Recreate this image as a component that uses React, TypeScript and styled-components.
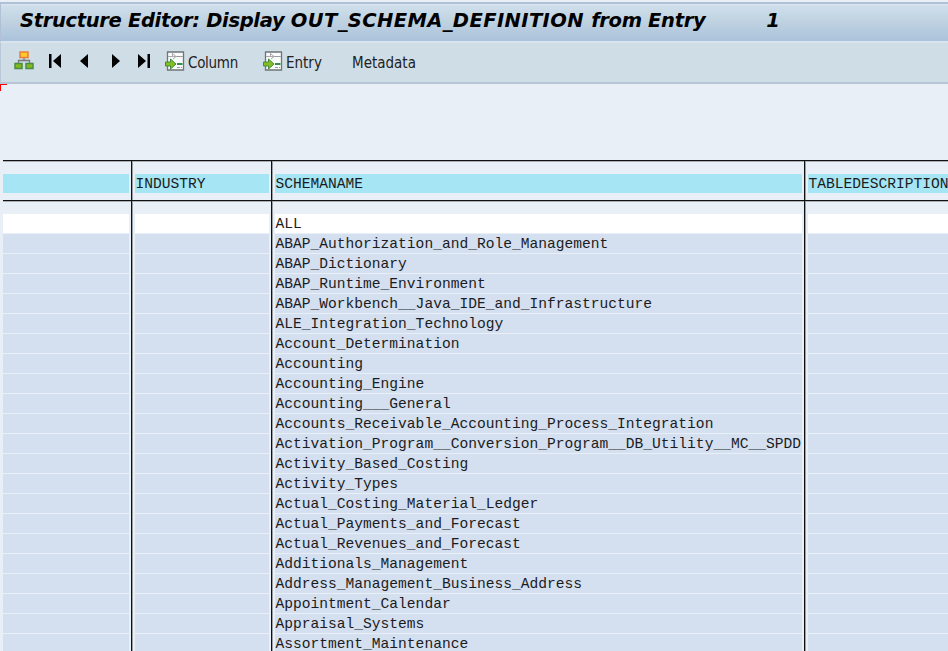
import React from "react";
import styled, { createGlobalStyle } from "styled-components";

const GlobalStyle = createGlobalStyle`
  * { box-sizing: border-box; }
  html, body { margin: 0; background: #e8eff6; overflow: hidden; }
`;

const Screen = styled.div`
  width: 948px;
  height: 651px;
  overflow: hidden;
  background: #e8eff6;
  display: flex;
  flex-direction: column;
  color: #000;
`;

const TitleBar = styled.header`
  flex: none;
  margin-top: 2px;
  height: 41px;
  display: flex;
  align-items: center;
  padding-left: 19px;
  border-top: 2px solid #b0c1d5;
  border-left: 1px solid #b0c1d5;
  border-bottom: 2px solid #d8e4f0;
  background: linear-gradient(#dce8f2 0, #cfdeeb 2px, #c0d3e1 45%, #aac2db 100%);
  white-space: pre;
`;

const Title = styled.h1`
  margin: 0 0 4px;
  font: italic bold 19.5px/24px "DejaVu Sans", Verdana, sans-serif;
  letter-spacing: -0.33px;
`;

const StructureName = styled.span`
  letter-spacing: 0.4px;
`;

const TitleIndex = styled(Title)`
  margin-left: 61px;
`;

const Toolbar = styled.nav`
  flex: none;
  height: 41px;
  display: flex;
  align-items: center;
  padding: 0 0 3px 13px;
  border-left: 1px solid #b8c8d7;
  border-bottom: 2px solid #b7c6d4;
  background: #cfdde7;
`;

const ToolButton = styled.button<{ $width: number; $tracking?: number }>`
  flex: none;
  width: ${(p) => p.$width}px;
  height: 24px;
  padding: 0;
  border: 0;
  background: none;
  color: #222;
  display: flex;
  align-items: center;
  gap: 3px;
  font: 15px/20px "DejaVu Sans Condensed", "DejaVu Sans", sans-serif;
  font-stretch: condensed;
  letter-spacing: ${(p) => p.$tracking ?? 0}px;
  white-space: nowrap;
`;

const Label = styled.span`
  padding-top: 3px;
`;

const Icon = styled.svg`
  flex: none;
  display: block;
`;

const ListArea = styled.main`
  position: relative;
  flex: 1;
  padding: 76px 0 0 3px;
`;

const CornerMark = styled.i`
  position: absolute;
  left: 0;
  top: 0;
  width: 7px;
  height: 7px;
  border-top: 1px solid #f00;
  border-left: 1px solid #f00;
`;

const Row = styled.div<{ $height: number }>`
  display: grid;
  grid-template-columns: 128px 140px 533px 150px;
  height: ${(p) => p.$height}px;
`;

const HeaderRow = styled(Row)`
  border-top: 1px solid #111;
  border-bottom: 1px solid #111;
  box-shadow: 0 1px 0 #aab0b5, inset 0 1px 0 #aab0b5;
`;

const Cell = styled.div<{ $top?: number }>`
  padding: ${(p) => p.$top ?? 0}px 2px 0 3px;
  border-left: 1px solid #111;
  box-shadow: inset 1px 0 0 #9a9fa4;
  &:first-child {
    border-left: 0;
    padding-left: 0;
    box-shadow: none;
  }
`;

const Fill = styled.div<{ $tone: "key" | "plain" | "data" }>`
  height: 19px;
  padding-left: 0.5px;
  background: ${(p) => ({ key: "#a6e5f3", plain: "#fff", data: "#d4dff0" })[p.$tone]};
  color: #1b1c22;
  font: 14.6px/20px "Liberation Mono", "Courier New", monospace;
  white-space: pre;
`;

const columns = ["", "INDUSTRY", "SCHEMANAME", "TABLEDESCRIPTION"];

const schemas = [
  "ALL",
  "ABAP_Authorization_and_Role_Management",
  "ABAP_Dictionary",
  "ABAP_Runtime_Environment",
  "ABAP_Workbench__Java_IDE_and_Infrastructure",
  "ALE_Integration_Technology",
  "Account_Determination",
  "Accounting",
  "Accounting_Engine",
  "Accounting___General",
  "Accounts_Receivable_Accounting_Process_Integration",
  "Activation_Program__Conversion_Program__DB_Utility__MC__SPDD",
  "Activity_Based_Costing",
  "Activity_Types",
  "Actual_Costing_Material_Ledger",
  "Actual_Payments_and_Forecast",
  "Actual_Revenues_and_Forecast",
  "Additionals_Management",
  "Address_Management_Business_Address",
  "Appointment_Calendar",
  "Appraisal_Systems",
  "Assortment_Maintenance",
];

const HierarchyIcon = () => (
  <Icon width="20" height="20" viewBox="0 0 20 20">
    <path d="M10 7v3M4.500 12.500V9.500h11v3" fill="none" stroke="#777" strokeWidth="1.300" />
    <rect x="6" y="1" width="8" height="5.500" fill="#ffc928" stroke="#ec7d36" strokeWidth="1.500" />
    <rect x="1" y="12.500" width="7" height="5" fill="#83b81e" stroke="#4b8d43" strokeWidth="1.500" />
    <rect x="12" y="12.500" width="7" height="5" fill="#83b81e" stroke="#4b8d43" strokeWidth="1.500" />
  </Icon>
);

const StepIcon = ({ forward, bar }: { forward?: boolean; bar?: boolean }) => (
  <Icon width="12" height="14" viewBox="0 0 12 14">
    <g transform={forward ? "translate(12 0) scale(-1 1)" : undefined}>
      {bar && <rect x="0" y="0" width="2.500" height="14" />}
      <path d={bar ? "M12 0v14L4 7z" : "M9 0v14L1 7z"} />
    </g>
  </Icon>
);

const SheetIcon = () => (
  <Icon width="20" height="20" viewBox="0 0 20 20">
    <path d="M2.500 1h16v18h-16z" fill="#f8fafb" stroke="#707477" strokeWidth="1.300" />
    <path d="M3 5.500h15M7.500 2v4M8 3l3 2.500L8 8" fill="none" stroke="#aaa" strokeWidth="1" />
    <path d="M12 5.500h5M12 16.500h5" stroke="#999" strokeDasharray="3 1" />
    <path d="M12 13h5.500" stroke="#338c50" strokeWidth="2" />
    <path d="M.5 11h5V8l5.500 5-5.500 5v-3h-5z" fill="#84bd25" stroke="#438c35" />
  </Icon>
);

export default function App() {
  return (
    <Screen>
      <GlobalStyle />
      <TitleBar>
        <Title>
          Structure Editor: Display <StructureName>OUT_SCHEMA_DEFINITION </StructureName>from Entry
        </Title>
        <TitleIndex as="span">1</TitleIndex>
      </TitleBar>
      <Toolbar>
        <ToolButton $width={35} aria-label="Hierarchy"><HierarchyIcon /></ToolButton>
        <ToolButton $width={30} aria-label="First"><StepIcon bar /></ToolButton>
        <ToolButton $width={30} aria-label="Previous"><StepIcon /></ToolButton>
        <ToolButton $width={29} aria-label="Next"><StepIcon forward /></ToolButton>
        <ToolButton $width={27} aria-label="Last"><StepIcon forward bar /></ToolButton>
        <ToolButton $width={98} $tracking={-0.3}><SheetIcon /><Label>Column</Label></ToolButton>
        <ToolButton $width={89}><SheetIcon /><Label>Entry</Label></ToolButton>
        <ToolButton $width={70}><Label>Metadata</Label></ToolButton>
      </Toolbar>
      <ListArea>
        <CornerMark />
        <HeaderRow $height={41}>
          {columns.map((name, i) => (
            <Cell key={i} $top={13}>
              <Fill $tone="key">{name}</Fill>
            </Cell>
          ))}
        </HeaderRow>
        <Row $height={13}>
          {columns.map((_, i) => <Cell key={i} />)}
        </Row>
        {schemas.map((schema, r) => (
          <Row key={schema} $height={20}>
            {columns.map((_, i) => (
              <Cell key={i}>
                <Fill $tone={r === 0 ? "plain" : "data"}>{i === 2 ? schema : ""}</Fill>
              </Cell>
            ))}
          </Row>
        ))}
      </ListArea>
    </Screen>
  );
}
